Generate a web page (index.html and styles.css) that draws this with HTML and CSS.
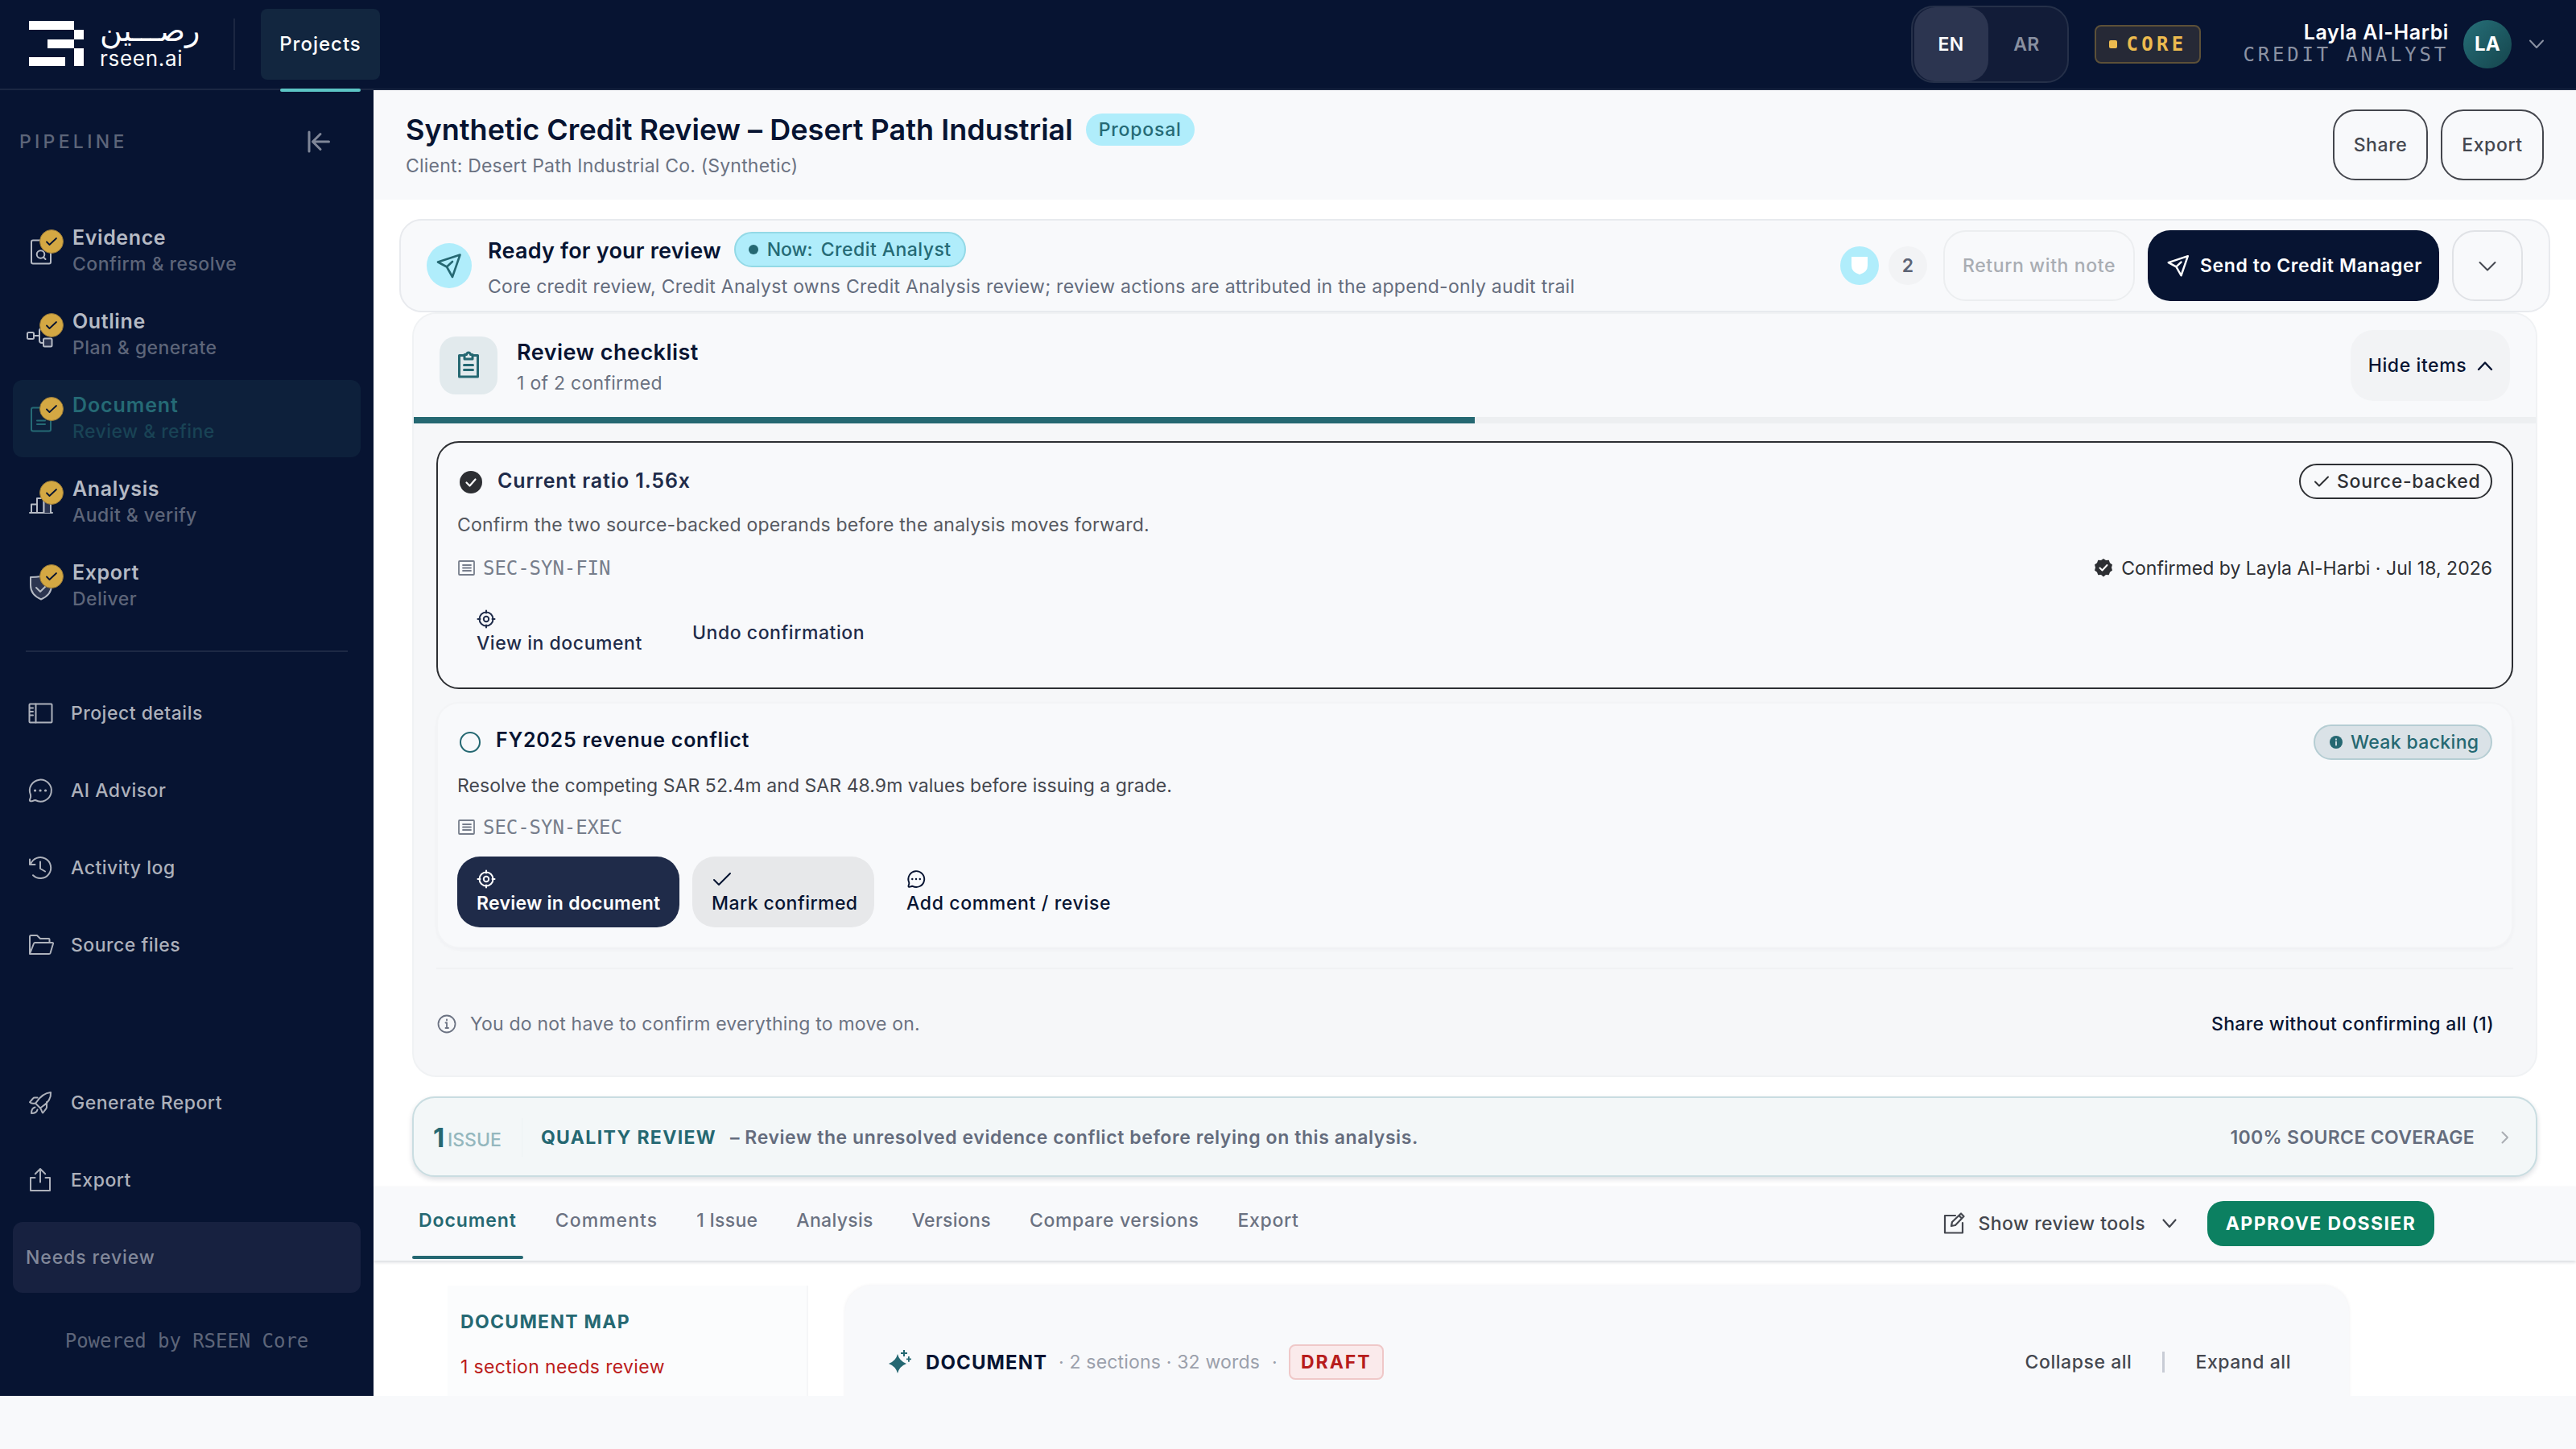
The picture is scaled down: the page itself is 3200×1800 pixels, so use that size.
FILE: index.html
```
<!DOCTYPE html>
<html lang="en">
<head>
    <meta charset="UTF-8">
    <meta name="viewport" content="width=device-width, initial-scale=1.0">
    <title>rseen.ai - Synthetic Credit Review</title>
    <link rel="stylesheet" href="styles.css">
</head>
<body>
    <div class="app">
        <header class="topbar">
            <svg class="logo-mark" width="68" height="56" viewBox="0 0 68 56" fill="#fff">
                <path d="M0 0h56v11H0zM56 11h12v12H56zM23 23h33v11H23zM56 34h12v22H56zM0 45h45v11H0z"/>
            </svg>
            <div class="logo-text">
                <span class="logo-ar" lang="ar" dir="rtl">رصـــين</span>
                <span class="logo-en">rseen.ai</span>
            </div>
            <span class="topbar-divider"></span>
            <a class="topnav">Projects</a>

            <div class="topbar-right">
                <div class="lang">
                    <span class="lang-item lang-on">EN</span>
                    <span class="lang-item">AR</span>
                </div>
                <div class="core"><i></i>CORE</div>
                <div class="user">
                    <span class="user-name">Layla Al-Harbi</span>
                    <span class="user-role">CREDIT ANALYST</span>
                </div>
                <div class="avatar">LA</div>
                <svg class="user-chevron" width="18" height="12" viewBox="0 0 18 12"><path d="M1 1.500l8 8.500 8-8.500"/></svg>
            </div>
        </header>

        <div class="layout">
            <aside class="sidebar">
                <div class="side-head">
                    <span>PIPELINE</span>
                    <svg width="28" height="26" viewBox="0 0 28 26"><path d="M2 1v24M26.500 13H7M16 3.500L6.500 13l9.500 9.500"/></svg>
                </div>

                <nav class="steps">
                    <a class="step">
                        <span class="step-icon">
                            <svg width="32" height="32" viewBox="0 0 32 32"><rect x="5" y="2.500" width="24" height="29" rx="2"/><circle cx="16.500" cy="20" r="4.800"/><path d="M20 23.500l2.500 2.500"/></svg>
                            <b class="badge"><svg width="16" height="12" viewBox="0 0 16 12"><path d="M2 6.500l3.500 3.500L14 2"/></svg></b>
                        </span>
                        <span class="step-text"><b>Evidence</b><small>Confirm &amp; resolve</small></span>
                    </a>
                    <a class="step">
                        <span class="step-icon">
                            <svg width="32" height="32" viewBox="0 0 32 32"><rect x="0" y="13" width="8" height="8" rx="1.500"/><path d="M8 17h7M20 8h-2q-3 0-3 3v12q0 3 3 3h2"/><rect class="tint" x="20" y="20.500" width="10.500" height="10" rx="1.500"/></svg>
                            <b class="badge"><svg width="16" height="12" viewBox="0 0 16 12"><path d="M2 6.500l3.500 3.500L14 2"/></svg></b>
                        </span>
                        <span class="step-text"><b>Outline</b><small>Plan &amp; generate</small></span>
                    </a>
                    <a class="step step-on">
                        <span class="step-icon">
                            <svg width="32" height="32" viewBox="0 0 32 32"><rect x="5" y="2.500" width="24" height="29" rx="2"/><path d="M12 18.500h10M12 23h10"/></svg>
                            <b class="badge"><svg width="16" height="12" viewBox="0 0 16 12"><path d="M2 6.500l3.500 3.500L14 2"/></svg></b>
                        </span>
                        <span class="step-text"><b>Document</b><small>Review &amp; refine</small></span>
                    </a>
                    <a class="step">
                        <span class="step-icon">
                            <svg width="32" height="32" viewBox="0 0 32 32"><path d="M3 29h28M5 29V18.500h7V29"/><path d="M12 29V11h8.500v18"/><path class="tint" d="M20.500 29V4H29v25"/></svg>
                            <b class="badge"><svg width="16" height="12" viewBox="0 0 16 12"><path d="M2 6.500l3.500 3.500L14 2"/></svg></b>
                        </span>
                        <span class="step-text"><b>Analysis</b><small>Audit &amp; verify</small></span>
                    </a>
                    <a class="step">
                        <span class="step-icon">
                            <svg width="32" height="32" viewBox="0 0 32 32"><path class="tint" d="M4 5q7 0 13-1 6 1 13 1v10q0 12-13 17.500Q4 27 4 15z"/><path d="M11 18l5 5 9-9"/></svg>
                            <b class="badge"><svg width="16" height="12" viewBox="0 0 16 12"><path d="M2 6.500l3.500 3.500L14 2"/></svg></b>
                        </span>
                        <span class="step-text"><b>Export</b><small>Deliver</small></span>
                    </a>
                </nav>

                <hr class="side-line">

                <nav class="links">
                    <a class="link">
                        <svg width="32" height="32" viewBox="0 0 32 32"><rect x="2.500" y="4.500" width="28" height="23" rx="1"/><path d="M10.500 4.500v23M3 9.500h4M3 14h4M3 18.500h4"/></svg>
                        Project details
                    </a>
                    <a class="link">
                        <svg width="32" height="32" viewBox="0 0 32 32"><path d="M4 21.500A13.500 13.500 0 1 1 10 28q-2 0-3 .9-2.500.9-3.800 0-.7-1 .3-2.900 1-2 .5-4.500z"/><path class="dots" d="M9.500 16h.1M16 16h.1M22.500 16h.1"/></svg>
                        AI Advisor
                    </a>
                    <a class="link">
                        <svg width="32" height="32" viewBox="0 0 32 32"><path d="M3 5.500V12h6.500M4 11.500A13 13 0 1 1 7 25.200M16 8.500V17l6 3.500"/></svg>
                        Activity log
                    </a>
                    <a class="link">
                        <svg width="32" height="32" viewBox="0 0 32 32"><path d="M3 27V5.500q0-1.500 1.500-1.500H12l4 4h10.500q1 0 1 1v4M3 27l5-13q.4-1 1.500-1H31q1.300 0 1 1.300L28.500 26q-.4 1-1.500 1z"/></svg>
                        Source files
                    </a>
                </nav>

                <nav class="links links-bottom">
                    <a class="link">
                        <svg width="32" height="32" viewBox="0 0 32 32"><path d="M11 15.500Q18.500 4 29 3q1 10.500-11 18l-2 1.500-6-6zM12.500 9.500H9q-1.200 0-2 1l-4 4.700q2 2.300 7 1.300M24 15v6.500q0 1-.8 1.800l-4 5.200q-1-.5-1.800-3.500l-1.400-2.500M9.500 21.500q-4.500 1-4.500 7.500 6.500 0 7.500-4.500"/></svg>
                        Generate Report
                    </a>
                    <a class="link">
                        <svg width="32" height="32" viewBox="0 0 32 32"><path d="M9.500 13H4v16h24V13h-5.500M16 18.500V2.500M9.800 8.200L16 2l6.200 6.200"/></svg>
                        Export
                    </a>
                </nav>
                <div class="needs">Needs review</div>
                <div class="powered">Powered by RSEEN Core</div>
            </aside>

            <main class="main">
                <div class="page-head">
                    <div class="page-title">
                        <div class="title-row">
                            <h1>Synthetic Credit Review – Desert Path Industrial</h1>
                            <span class="pill-proposal">Proposal</span>
                        </div>
                        <p>Client: Desert Path Industrial Co. (Synthetic)</p>
                    </div>
                    <div class="head-actions">
                        <button class="btn btn-dark-outline">Share</button>
                        <button class="btn btn-dark-outline">Export</button>
                    </div>
                </div>

                <section class="ready">
                    <span class="ready-icon">
                        <svg width="32" height="32" viewBox="0 0 32 32"><path d="M29.500 2.500L2 11.500l11 6 7 12.500zM13 17.500l7-6.500"/></svg>
                    </span>
                    <div class="ready-text">
                        <div class="ready-row">
                            <h2>Ready for your review</h2>
                            <span class="pill-now"><i></i><span>Now:</span><span>Credit Analyst</span></span>
                        </div>
                        <p>Core credit review, Credit Analyst owns Credit Analysis review; review actions are attributed in the append-only audit trail</p>
                    </div>
                    <div class="ready-actions">
                        <span class="dot-shield"><svg width="20" height="22" viewBox="0 0 20 22"><path d="M0 0h20v11q0 8-10 11Q0 19 0 11z"/></svg></span>
                        <span class="dot-count">2</span>
                        <button class="btn btn-faded">Return with note</button>
                        <button class="btn btn-send">
                            <svg width="28" height="28" viewBox="0 0 32 32"><path d="M29.500 2.500L2 11.500l11 6 7 12.500zM13 17.500l7-6.500"/></svg>
                            Send to Credit Manager
                        </button>
                        <button class="btn btn-more"><svg width="22" height="14" viewBox="0 0 22 14"><path d="M1.500 3L11 12.500 20.500 3"/></svg></button>
                    </div>
                </section>

                <section class="checklist">
                    <div class="check-head">
                        <span class="check-icon">
                            <svg width="28" height="34" viewBox="0 0 28 34"><path d="M9 4.500H2.500V31h23V4.500H19M9 3.500h2.500q.5-2.500 2.500-2.500t2.500 2.500H19V9H9zM8.500 16.500h11M8.500 22.500h11"/></svg>
                        </span>
                        <div class="check-title">
                            <h2>Review checklist</h2>
                            <p>1 of 2 confirmed</p>
                        </div>
                        <button class="btn btn-hide">Hide items <svg width="18" height="13" viewBox="0 0 18 13"><path d="M1 11L9 2.500l8 8.500"/></svg></button>
                    </div>
                    <div class="progress"><div class="progress-fill" style="width: 50%"></div></div>

                    <div class="check-body">
                        <article class="item item-done">
                            <div class="item-top">
                                <svg class="state" width="28" height="28" viewBox="0 0 28 28"><circle cx="14" cy="14" r="14" fill="#2d2f33"/><path d="M8.500 14.500l4 4 7-8" stroke="#fff" stroke-width="2.200" fill="none"/></svg>
                                <h3>Current ratio 1.56x</h3>
                                <span class="tag tag-source"><svg width="18" height="14" viewBox="0 0 18 14"><path d="M1 7.500l5 5L17 1.500"/></svg>Source-backed</span>
                            </div>
                            <p class="item-desc">Confirm the two source-backed operands before the analysis moves forward.</p>
                            <div class="item-ref">
                                <svg width="22" height="22" viewBox="0 0 22 22"><rect x="2" y="2" width="19" height="17" rx="1"/><path d="M7 7h10M7 10.500h10M7 14h10"/></svg>
                                <span class="mono">SEC-SYN-FIN</span>
                                <span class="confirmed">
                                    <svg width="24" height="24" viewBox="0 0 24 24"><path d="M12 0l3 2 3.700-.2 1.300 3.400 3 2.200L22 11l1 3.600-3 2.200-1.300 3.400-3.700-.2-3 2.500-3-2.500-3.700.2L4 16.800l-3-2.200L2 11 1 7.400l3-2.200 1.300-3.400L9 2z" fill="#2d2f33"/><path d="M7.500 11.500l3 3 6-6.500" stroke="#fff" stroke-width="2" fill="none"/></svg>
                                    Confirmed by Layla Al-Harbi · Jul 18, 2026
                                </span>
                            </div>
                            <div class="item-actions">
                                <button class="act act-view">
                                    <svg width="24" height="22" viewBox="0 0 24 22"><circle cx="12" cy="11" r="8.500"/><circle cx="12" cy="11" r="3.200"/><path d="M12 0.500v3M12 18.500v3M1.500 11h3M19.500 11h3"/></svg>
                                    View in document
                                </button>
                                <button class="act">Undo confirmation</button>
                            </div>
                        </article>

                        <article class="item item-open">
                            <div class="item-top">
                                <svg class="state" width="28" height="28" viewBox="0 0 28 28"><circle cx="13" cy="13" r="12" fill="none" stroke="#256872" stroke-width="2"/></svg>
                                <h3>FY2025 revenue conflict</h3>
                                <span class="tag tag-weak"><svg width="16" height="16" viewBox="0 0 16 16"><circle cx="8" cy="8" r="8" fill="#256872"/><path d="M8 7.500v4M8 4.200v.6" stroke="#dae2e7" stroke-width="1.800"/></svg>Weak backing</span>
                            </div>
                            <p class="item-desc">Resolve the competing SAR 52.4m and SAR 48.9m values before issuing a grade.</p>
                            <div class="item-ref">
                                <svg width="22" height="22" viewBox="0 0 22 22"><rect x="2" y="2" width="19" height="17" rx="1"/><path d="M7 7h10M7 10.500h10M7 14h10"/></svg>
                                <span class="mono">SEC-SYN-EXEC</span>
                            </div>
                            <div class="item-actions">
                                <button class="act act-primary">
                                    <svg width="24" height="22" viewBox="0 0 24 22"><circle cx="12" cy="11" r="8.500"/><circle cx="12" cy="11" r="3.200"/><path d="M12 0.500v3M12 18.500v3M1.500 11h3M19.500 11h3"/></svg>
                                    Review in document
                                </button>
                                <button class="act act-mark">
                                    <svg width="24" height="22" viewBox="0 0 24 22"><path d="M3 12l6 6L23 4"/></svg>
                                    Mark confirmed
                                </button>
                                <button class="act act-add">
                                    <svg class="chat" width="24" height="22" viewBox="1 1 30 30"><path d="M4 21.500A13.500 13.500 0 1 1 10 28q-2 0-3 .9-2.500.9-3.800 0-.7-1 .3-2.900 1-2 .5-4.500z"/><path class="dots" d="M9.500 16h.1M16 16h.1M22.500 16h.1"/></svg>
                                    Add comment / revise
                                </button>
                            </div>
                        </article>

                        <div class="check-foot">
                            <svg width="24" height="24" viewBox="0 0 24 24"><circle cx="13" cy="12" r="10.500"/><path d="M11.500 10.500H13v6.500M11.500 17h3.500M13 6.500v1"/></svg>
                            <span>You do not have to confirm everything to move on.</span>
                            <a>Share without confirming all (1)</a>
                        </div>
                    </div>
                </section>

                <section class="quality">
                    <span class="q-num">1</span>
                    <span class="q-issue">ISSUE</span>
                    <span class="q-line"></span>
                    <span class="q-title">QUALITY REVIEW</span>
                    <span class="q-text">– Review the unresolved evidence conflict before relying on this analysis.</span>
                    <span class="q-cover">100% SOURCE COVERAGE</span>
                    <svg width="10" height="16" viewBox="0 0 10 16"><path d="M1.500 1.500L8 8l-6.500 6.500"/></svg>
                </section>

                <div class="tabs">
                    <a class="tab tab-on">Document</a>
                    <a class="tab tab-comments">Comments</a>
                    <a class="tab">1 Issue</a>
                    <a class="tab">Analysis</a>
                    <a class="tab">Versions</a>
                    <a class="tab tab-compare">Compare versions</a>
                    <a class="tab tab-compare">Export</a>
                    <div class="tools">
                        <svg width="28" height="28" viewBox="0 0 28 28"><path d="M16 4H3v21.500h22V13M11 17l1-5L23 1.500l3.500 3.500L16 16zM20.500 4l3.500 3.500"/></svg>
                        <span>Show review tools</span>
                        <svg width="18" height="12" viewBox="0 0 18 12"><path d="M1.500 1.500L9 10l7.500-8.500"/></svg>
                    </div>
                    <button class="approve">APPROVE DOSSIER</button>
                </div>

                <div class="doc-area">
                    <div class="doc-map">
                        <h4>DOCUMENT MAP</h4>
                        <p>1 section needs review</p>
                    </div>
                    <div class="doc-card">
                        <div class="doc-head">
                            <svg width="32" height="32" viewBox="0 0 32 32"><path d="M12 6q2 8.500 11 12-9 3.500-11 12-2-8.500-11-12 9-3.500 11-12zM19 1h2v3h3v2h-3v3h-2V6h-3V4h3zM25 9h1.800v2.500H29v1.800h-2.200v2.500H25v-2.500h-2v-1.800h2z"/></svg>
                            <b>DOCUMENT</b>
                            <span class="doc-meta">· 2 sections · 32 words</span>
                            <span class="doc-dot">·</span>
                            <span class="draft">DRAFT</span>
                            <a class="doc-link doc-first">Collapse all</a>
                            <span class="doc-sep"></span>
                            <a class="doc-link">Expand all</a>
                        </div>
                    </div>
                </div>
            </main>
        </div>
    </div>
</body>
</html>
```
FILE: styles.css
```
* {
    box-sizing: border-box;
}
body {
    margin: 0;
    background: #f8f9fb;
    font-family: Inter, "Noto Sans", sans-serif;
    font-size: 23px;
    letter-spacing: 0.28px;
    color: #071432;
}
h1, h2, h3, h4, p {
    margin: 0;
}
button {
    font: inherit;
    letter-spacing: inherit;
    color: inherit;
    border: none;
    background: none;
    padding: 0;
}
svg {
    display: block;
    flex: none;
    overflow: visible;
    stroke-linecap: round;
    stroke-linejoin: round;
}
.app {
    height: 1734px;
    overflow: hidden;
    background: #fff;
    white-space: nowrap;
}

/* top bar */
.topbar {
    display: flex;
    align-items: center;
    height: 112px;
    padding: 0 40px 0 36px;
    background: #071432;
    border-bottom: 2px solid #1b2742;
    color: #fff;
}
.logo-mark {
    margin-top: -2px;
}
.logo-text {
    display: flex;
    flex-direction: column;
    width: 136px;
    margin: 0 30px 0 20px;
}
.logo-ar {
    font-family: "DejaVu Sans", sans-serif;
    font-size: 38px;
    line-height: 26px;
    letter-spacing: 0;
    text-align: left;
}
.logo-en {
    margin-top: 9px;
    font-size: 26px;
    line-height: 26px;
    letter-spacing: 0.7px;
}
.topbar-divider {
    width: 2px;
    height: 64px;
    background: #1b2742;
}
.topnav {
    position: relative;
    width: 148px;
    height: 88px;
    margin-left: 32px;
    border-radius: 8px;
    background: #12263f;
    font-size: 24px;
    font-weight: 500;
    letter-spacing: 1px;
    line-height: 88px;
    text-align: center;
}
.topnav::after {
    content: "";
    position: absolute;
    left: 24px;
    bottom: -15px;
    width: 100px;
    height: 4px;
    border-radius: 2px;
    background: #5cc5c5;
}
.topbar-right {
    display: flex;
    align-items: center;
    margin-left: auto;
}
.lang {
    display: flex;
    width: 196px;
    height: 96px;
    padding-left: 2px;
    border: 2px solid #253049;
    border-radius: 28px;
    background: #121c38;
}
.lang-item {
    width: 96px;
    line-height: 92px;
    text-align: center;
    font-weight: 600;
    color: #8990a0;
}
.lang-on {
    width: 92px;
    background: #2c3550;
    border-radius: 26px;
    color: #fff;
}
.core {
    display: flex;
    align-items: center;
    width: 132px;
    height: 48px;
    margin-left: 32px;
    padding-left: 16px;
    border: 2px solid #5c5038;
    border-radius: 8px;
    background: #262936;
    color: #edbb4f;
    font: bold 24px "DejaVu Sans Mono", monospace;
    letter-spacing: 4.3px;
}
.core i {
    width: 10px;
    height: 10px;
    margin-right: 12px;
    border-radius: 2px;
    background: #edbb4f;
}
.user {
    display: flex;
    flex-direction: column;
    align-items: flex-end;
    margin: 0 18px 0 53px;
    padding-bottom: 4px;
}
.user-name {
    font-size: 25px;
    font-weight: 600;
    letter-spacing: 0.6px;
    line-height: 30px;
}
.user-role {
    font: 24px/27px "DejaVu Sans Mono", monospace;
    letter-spacing: 3.8px;
    color: #8b92a3;
}
.avatar {
    width: 60px;
    border-radius: 50%;
    background: linear-gradient(135deg, #266f78, #15454d);
    font-size: 24px;
    font-weight: 700;
    line-height: 60px;
    text-align: center;
}
.user-chevron {
    margin-left: 22px;
    stroke: #8b92a3;
    stroke-width: 2;
    fill: none;
}

/* sidebar */
.layout {
    display: flex;
    height: 1622px;
}
.sidebar {
    flex: none;
    width: 464px;
    background: #071432;
}
.side-head {
    display: flex;
    align-items: center;
    justify-content: space-between;
    height: 128px;
    padding: 0 54px 0 24px;
    color: #5d6579;
    font-weight: 500;
    letter-spacing: 4.3px;
}
.side-head svg {
    stroke: #7f8697;
    stroke-width: 3;
    fill: none;
}
.steps {
    display: flex;
    flex-direction: column;
    gap: 8px;
    padding: 24px 16px 0;
}
.step {
    display: flex;
    align-items: center;
    height: 96px;
    padding-left: 18px;
    border-radius: 12px;
    color: #b5bac4;
}
.step-icon {
    position: relative;
    margin-right: 24px;
}
.step-icon > svg {
    stroke: currentColor;
    stroke-width: 2;
    fill: none;
}
.step-icon .tint {
    fill: #2c3550;
}
.badge {
    position: absolute;
    left: 15px;
    top: -11px;
    display: flex;
    align-items: center;
    justify-content: center;
    width: 30px;
    height: 30px;
    border: 1px solid #97793a;
    border-radius: 50%;
    background: #d4a843;
}
.badge svg {
    stroke: #071432;
    stroke-width: 1.8;
    fill: none;
}
.step-text b,
.step-text small {
    display: block;
    line-height: 33px;
}
.step-text b {
    font-size: 25px;
    font-weight: 600;
    letter-spacing: 0.6px;
}
.step-text small {
    font-size: 23px;
    font-weight: 450;
    letter-spacing: 0.45px;
    color: #5d6579;
}
.step-on {
    background: #0d203b;
    color: #256a75;
}
.step-on .step-text b {
    letter-spacing: 0.9px;
}
.step-on .step-text small {
    color: #194355;
}
.side-line {
    height: 2px;
    margin: 32px 32px 32px;
    border: none;
    background: #1d2945;
}
.links {
    display: flex;
    flex-direction: column;
    gap: 8px;
}
.links-bottom {
    margin-top: 108px;
}
.link {
    display: flex;
    align-items: center;
    gap: 22px;
    height: 88px;
    padding-left: 34px;
    color: #adb1bb;
    font-weight: 450;
    letter-spacing: 0.5px;
}
.link svg {
    stroke: currentColor;
    stroke-width: 2;
    fill: none;
}
svg .dots {
    stroke-width: 3.2;
}
.needs {
    height: 88px;
    margin: 8px 16px 0;
    padding-left: 16px;
    border-radius: 12px;
    background: #172140;
    color: #82889a;
    font-weight: 450;
    letter-spacing: 0.9px;
    line-height: 88px;
}
.powered {
    margin-top: 46px;
    color: #5d6579;
    font: 24px/28px "DejaVu Sans Mono", monospace;
    letter-spacing: -0.05px;
    text-align: center;
}

/* page header */
.main {
    flex: 1;
    min-width: 0;
}
.page-head {
    display: flex;
    align-items: center;
    justify-content: space-between;
    height: 136px;
    padding: 0 40px;
    background: #f8f9fb;
}
.page-title {
    padding-bottom: 3px;
}
.title-row {
    display: flex;
    align-items: center;
    gap: 16px;
}
.page-head h1 {
    font-size: 36px;
    font-weight: 600;
    letter-spacing: 0.04px;
    line-height: 54px;
}
.page-head p {
    line-height: 36px;
    letter-spacing: 0.2px;
    color: #6b7282;
}
.pill-proposal {
    height: 40px;
    padding: 0 16px;
    border-radius: 20px;
    background: #b0edfb;
    color: #256a75;
    font-weight: 450;
    letter-spacing: 0.8px;
    line-height: 40px;
}
.head-actions {
    display: flex;
    gap: 16px;
}
.btn {
    height: 88px;
    border-radius: 28px;
    font-weight: 450;
    letter-spacing: 0.6px;
}
.btn-dark-outline {
    width: 128px;
    border: 2px solid #44464d;
    color: #44474f;
}
.btn-dark-outline:first-child {
    width: 118px;
}

/* ready for review */
.ready {
    display: flex;
    align-items: center;
    height: 116px;
    margin: 24px 32px 0;
    padding: 0 32px;
    border: 2px solid #e8eaee;
    border-radius: 28px;
    background: #f8f9fb;
}
.ready-icon {
    display: flex;
    align-items: center;
    justify-content: center;
    width: 56px;
    height: 56px;
    margin-right: 20px;
    border-radius: 50%;
    background: #b0edfb;
}
.ready-icon svg {
    stroke: #256872;
    stroke-width: 2.6;
    fill: none;
}
.ready-text {
    padding-top: 8px;
}
.ready-row {
    display: flex;
    align-items: center;
    gap: 16px;
}
.ready h2,
.checklist h2 {
    font-size: 27px;
    font-weight: 600;
    letter-spacing: 0.22px;
}
.ready h2 {
    padding-top: 3px;
}
.ready p {
    line-height: 48px;
    color: #646c7d;
}
.pill-now {
    display: flex;
    align-items: center;
    width: 288px;
    height: 44px;
    padding-left: 16px;
    border: 2px solid #93d9e6;
    border-radius: 22px;
    background: #b0edfb;
    color: #256a75;
    font-weight: 450;
    letter-spacing: 0.45px;
}
.pill-now i {
    width: 12px;
    height: 12px;
    margin-right: 11px;
    border-radius: 50%;
    background: #256872;
}
.pill-now span:first-of-type {
    width: 67px;
    letter-spacing: -0.1px;
}
.ready-actions {
    display: flex;
    align-items: center;
    gap: 16px;
    margin-left: auto;
}
.dot-shield,
.dot-count {
    display: flex;
    align-items: center;
    justify-content: center;
    width: 48px;
    height: 48px;
    border-radius: 50%;
    background: #b0edfb;
}
.dot-shield {
    margin-right: -4px;
}
.dot-shield svg {
    fill: #fff;
}
.dot-count {
    margin-right: 4px;
    background: #f2f3f5;
    color: #5d6475;
    font-weight: 600;
}
.btn-faded {
    width: 238px;
    border: 2px solid #eceef0;
    color: #a9adb3;
}
.btn-send {
    display: flex;
    align-items: center;
    gap: 13px;
    width: 362px;
    padding-left: 24px;
    background: #071432;
    color: #fff;
    font-weight: 600;
}
.btn-send svg {
    stroke: #fff;
    stroke-width: 2.8;
    fill: none;
}
.btn-more {
    display: flex;
    align-items: center;
    justify-content: center;
    width: 88px;
    border: 2px solid #e0e2e6;
}
.btn-more svg {
    stroke: #44474f;
    stroke-width: 2;
    fill: none;
}

/* checklist */
.checklist {
    height: 950px;
    margin: 0 48px;
    border: 2px solid #f0f2f4;
    border-radius: 30px;
    background: #f6f7f9;
    overflow: hidden;
}
.check-head {
    display: flex;
    align-items: center;
    height: 128px;
    padding: 0 32px;
    background: #f8f9fb;
}
.check-icon {
    display: flex;
    align-items: center;
    justify-content: center;
    width: 72px;
    height: 72px;
    margin-right: 24px;
    border-radius: 20px;
    background: #e2eaed;
}
.check-icon svg {
    stroke: #256872;
    stroke-width: 3;
    fill: none;
}
.check-title {
    padding-top: 4px;
}
.check-title h2 {
    line-height: 40px;
    letter-spacing: 0.45px;
}
.check-title p {
    color: #6b7282;
    line-height: 36px;
}
.btn-hide {
    display: flex;
    align-items: center;
    justify-content: center;
    gap: 14px;
    width: 198px;
    margin-left: auto;
    background: #f2f3f5;
}
.btn-hide svg {
    stroke: #071432;
    stroke-width: 2.4;
    fill: none;
}
.progress {
    height: 8px;
    background: #edeff1;
}
.progress-fill {
    height: 100%;
    background: #256872;
}
.check-body {
    padding: 22px 28px 0;
}
.item {
    padding: 26px 24px 0;
    border: 2px solid #f2f4f6;
    border-radius: 28px;
    background: #f8f9fb;
}
.item-done {
    height: 308px;
    border-color: #2d2f33;
}
.item-open {
    height: 306px;
    margin-top: 16px;
    border-color: #f3f4f6;
    box-shadow: 0 2px 4px rgba(7, 20, 50, 0.03);
}
.item-top {
    display: flex;
    align-items: center;
    height: 44px;
}
.state {
    margin: 2px 19px 0 3px;
}
.item-open .state {
    margin-right: 17px;
}
.item h3 {
    padding-bottom: 2px;
    font-size: 25px;
    font-weight: 600;
    letter-spacing: 0.85px;
}
.item-done h3 {
    color: #1f2c4a;
}
.item-open h3 {
    padding-bottom: 6px;
    letter-spacing: 0.75px;
}
.tag {
    display: flex;
    align-items: center;
    height: 44px;
    margin-left: auto;
    padding: 0 16px 0 17px;
    border: 2px solid #2d2f33;
    border-radius: 22px;
    font-weight: 450;
    letter-spacing: 0.7px;
    color: #2d2f33;
}
.tag svg {
    margin-right: 10px;
}
.tag-source {
    width: 240px;
}
.tag-source svg {
    stroke: #2d2f33;
    stroke-width: 2;
    fill: none;
}
.tag-weak {
    width: 222px;
    padding-left: 18px;
    border-color: #b5cdd3;
    background: #dae2e7;
    color: #256872;
    letter-spacing: 0.35px;
}
.item-desc {
    margin-top: 12px;
    line-height: 40px;
    letter-spacing: 0.22px;
    color: #55585f;
}
.item-open .item-desc {
    color: #44474f;
    letter-spacing: 0.05px;
}
.item-ref {
    display: flex;
    align-items: center;
    height: 40px;
    margin-top: 12px;
    color: #777e8c;
}
.item-done .item-ref {
    margin-top: 14px;
}
.item-ref > svg {
    margin-right: 10px;
    stroke: #777e8c;
    stroke-width: 1.8;
    fill: none;
}
.mono {
    font-family: "DejaVu Sans Mono", monospace;
    font-size: 24px;
    letter-spacing: -0.05px;
}
.confirmed {
    display: flex;
    align-items: center;
    gap: 10px;
    margin-left: auto;
    color: #2d2f33;
    letter-spacing: 0.02px;
}
.item-actions {
    display: flex;
    gap: 16px;
    margin-top: 16px;
}
.item-done .item-actions {
    margin-top: 15px;
    color: #1f2c4a;
}
.act {
    display: flex;
    flex-direction: column;
    align-items: flex-start;
    justify-content: center;
    height: 88px;
    padding: 2px 24px 0;
    border-radius: 28px;
    font-weight: 450;
    letter-spacing: 0.55px;
    line-height: 29px;
}
.act svg {
    height: 22px;
    margin-bottom: 5px;
    stroke: currentColor;
    stroke-width: 2;
    fill: none;
}
.act .chat {
    stroke-width: 2.6;
}
.act-view {
    width: 252px;
}
.act-primary {
    width: 276px;
    background: #1f2b49;
    color: #fff;
    font-weight: 600;
    letter-spacing: 0.25px;
}
.act-mark {
    width: 226px;
    background: #e7e8ea;
    letter-spacing: 0.45px;
}
.act-add {
    letter-spacing: 0.65px;
}
.check-foot {
    display: flex;
    align-items: center;
    height: 134px;
    margin-top: 24px;
    padding: 4px 24px 0 0;
    border-top: 2px solid #f1f2f4;
    color: #6b7282;
    letter-spacing: 0.2px;
}
.check-foot svg {
    margin-right: 18px;
    stroke: #6b7282;
    stroke-width: 1.8;
    fill: none;
}
.check-foot a {
    margin-left: auto;
    color: #071432;
    font-weight: 450;
    letter-spacing: 0.32px;
}

/* quality strip */
.quality {
    display: flex;
    align-items: center;
    height: 100px;
    margin: 24px 48px 0;
    padding: 2px 33px 0 24px;
    border: 2px solid #c9dde1;
    border-radius: 28px;
    background: #f3f7f8;
    box-shadow: 0 3px 6px rgba(7, 20, 50, 0.14);
    font-weight: 600;
    color: #646c7d;
}
.q-num {
    width: 18px;
    font-size: 33px;
    font-weight: 700;
    letter-spacing: 0;
    color: #256872;
}
.q-issue {
    padding-top: 5px;
    font-weight: 500;
    letter-spacing: 0;
    color: #94b7be;
}
.q-line {
    width: 2px;
    height: 48px;
    margin: 0 22px 0 25px;
    background: #f0f5f6;
}
.q-title {
    width: 235px;
    font-weight: 700;
    letter-spacing: 1.35px;
    color: #256872;
}
.q-text {
    letter-spacing: 0.58px;
}
.q-cover {
    margin: 0 33px 0 auto;
    letter-spacing: 0.35px;
}
.quality svg {
    stroke: #a9adb3;
    stroke-width: 2;
    fill: none;
}

/* tabs */
.tabs {
    display: flex;
    align-items: center;
    gap: 32px;
    height: 92px;
    margin-top: 12px;
    padding: 0 176px 0 48px;
    background: #f8f9fb;
    box-shadow: 0 2px 4px rgba(7, 20, 50, 0.16);
}
.tab {
    position: relative;
    padding: 0 8px;
    color: #6b7282;
    font-weight: 500;
    letter-spacing: 0.3px;
    line-height: 84px;
    height: 92px;
}
.tab-on {
    color: #256872;
    font-weight: 600;
    letter-spacing: 0.9px;
}
.tab-comments {
    letter-spacing: 1.05px;
}
.tab-compare {
    letter-spacing: 0.65px;
}
.tab-on::after {
    content: "";
    position: absolute;
    left: 0;
    right: 0;
    bottom: 2px;
    height: 4px;
    border-radius: 2px;
    background: #256872;
}
.tools {
    display: flex;
    align-items: center;
    margin-left: auto;
    color: #44474f;
    font-weight: 500;
    letter-spacing: 0.45px;
}
.tools svg {
    stroke: #44474f;
    stroke-width: 2.2;
    fill: none;
}
.tools span {
    margin: 0 21px 0 17px;
}
.approve {
    width: 282px;
    height: 56px;
    margin-left: 6px;
    border-radius: 20px;
    background: #0c8061;
    color: #fff;
    font-weight: 700;
    letter-spacing: 1.4px;
}

/* document area */
.doc-area {
    display: flex;
    gap: 46px;
    padding: 31px 0 0 92px;
}
.doc-map {
    width: 448px;
    height: 200px;
    padding: 17px 16px 0;
    border-right: 2px solid #f5f6f8;
    background: #fbfcfd;
    line-height: 56px;
}
.doc-map h4 {
    font-size: 23px;
    font-weight: 700;
    letter-spacing: 1.3px;
    color: #256872;
}
.doc-map p {
    color: #bb1b1b;
    letter-spacing: 0.35px;
}
.doc-card {
    width: 1868px;
    height: 200px;
    border-radius: 32px 32px 0 0;
    background: #f8f9fb;
    box-shadow: 0 0 4px rgba(7, 20, 50, 0.07);
}
.doc-head {
    display: flex;
    align-items: center;
    height: 189px;
    padding: 1px 72px 0 53px;
}
.doc-head svg {
    fill: #256872;
}
.doc-head b {
    width: 165px;
    margin-left: 15px;
    font-size: 24px;
    font-weight: 700;
    letter-spacing: 1.1px;
}
.doc-meta,
.doc-dot {
    letter-spacing: 0.18px;
    color: #9ba0ab;
}
.doc-dot {
    margin: 0 14px 0 15px;
}
.draft {
    width: 118px;
    height: 44px;
    border: 2px solid #efc8c8;
    border-radius: 8px;
    background: #faeaeb;
    color: #b71c1c;
    font-weight: 700;
    letter-spacing: 2px;
    line-height: 40px;
    text-align: center;
}
.doc-link {
    color: #44474f;
    font-weight: 500;
    letter-spacing: 0.55px;
}
.doc-first {
    margin-left: auto;
}
.doc-sep {
    width: 3px;
    height: 26px;
    margin: 0 38px;
    background: #c8ccd5;
}
```
